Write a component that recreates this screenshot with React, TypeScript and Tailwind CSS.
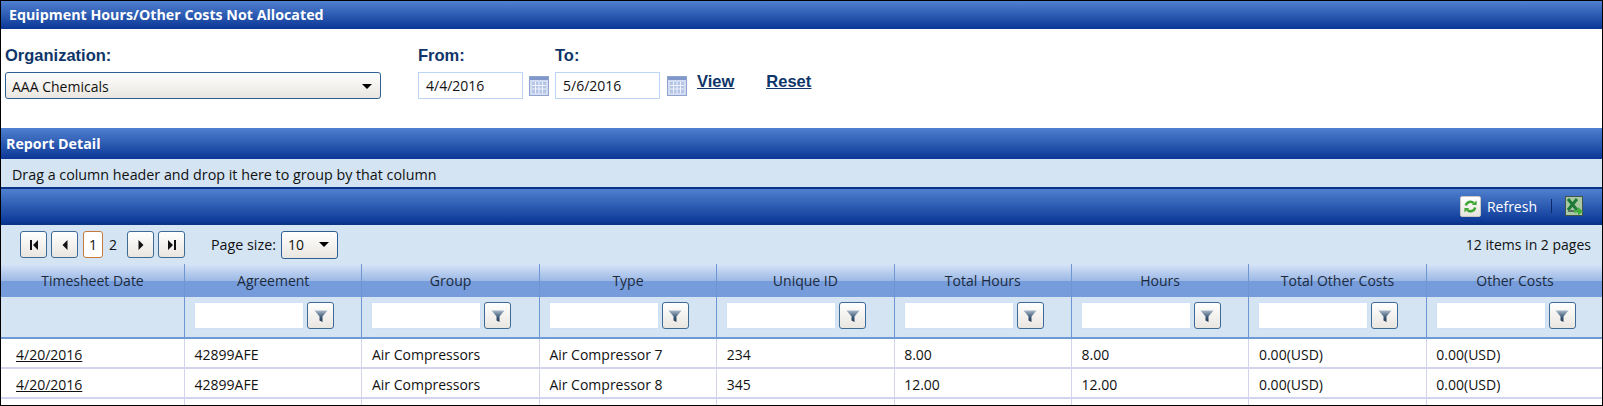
import React from 'react';

const columns = ['Agreement', 'Group', 'Type', 'Unique ID', 'Total Hours', 'Hours', 'Total Other Costs', 'Other Costs'];

const rows = [
  ['4/20/2016', '42899AFE', 'Air Compressors', 'Air Compressor 7', '234', '8.00', '8.00', '0.00(USD)', '0.00(USD)'],
  ['4/20/2016', '42899AFE', 'Air Compressors', 'Air Compressor 8', '345', '12.00', '12.00', '0.00(USD)', '0.00(USD)'],
];

const gridCols = 'grid grid-cols-[183px_repeat(8,177.4px)]';

function Caret() {
  return <span className="w-0 h-0 border-x-[5px] border-x-transparent border-t-[5px] border-t-black" />;
}

function CalendarIcon() {
  return (
    <svg width="20" height="20" viewBox="0 0 20 20" className="shrink-0">
      <rect x="0.5" y="0.5" width="19" height="19" fill="#d3dcf0" stroke="#8fa3cf" />
      <rect x="1" y="1" width="18" height="3" fill="#7f97c9" />
      <path d="M3 6h14v11H3z" fill="#b4c4e6" />
      <path d="M3 9.5h14M3 13h14M6.5 6v11M10 6v11M13.5 6v11" stroke="#eef2fb" strokeWidth="1" />
    </svg>
  );
}

function FunnelIcon() {
  return (
    <svg width="14" height="14" viewBox="0 0 14 14">
      <defs>
        <linearGradient id="funnel" x1="0" y1="0" x2="0" y2="1">
          <stop offset="0" stopColor="#a9b9c9" />
          <stop offset="0.6" stopColor="#3a5673" />
          <stop offset="1" stopColor="#1f3650" />
        </linearGradient>
      </defs>
      <path d="M0.5 1.5h13L8.5 7.5V13l-3-1.5v-4z" fill="url(#funnel)" />
    </svg>
  );
}

function PagerButton({ path }: { path: string }) {
  return (
    <button className="w-[27px] h-[27px] flex items-center justify-center rounded-[3px] border border-[#3f6a96] bg-gradient-to-b from-white to-[#e9e6e0]">
      <svg width="12" height="12" viewBox="0 0 12 12">
        <path d={path} fill="#111" />
      </svg>
    </button>
  );
}

function SectionBar({ title, className }: { title: string; className: string }) {
  return (
    <div className={`bg-gradient-to-b from-[#5080cf] to-[#0a3696] flex items-center font-['Open_Sans',sans-serif] font-bold text-[14.25px] text-white ${className}`}>
      {title}
    </div>
  );
}

function RefreshIcon() {
  return (
    <span className="w-[21px] h-[21px] flex items-center justify-center rounded-[2px] bg-gradient-to-b from-white to-[#e6e4dc] border border-[#c9c9c0]">
      <svg width="15" height="15" viewBox="0 0 16 16" fill="none" stroke="#3fa535" strokeWidth="2.6">
        <path d="M3 7a5 5 0 0 1 8.5-2.5" />
        <path d="M13 9a5 5 0 0 1-8.5 2.5" />
        <path d="M9.5 6.5h5v-5z" fill="#3fa535" stroke="none" />
        <path d="M6.5 9.5h-5v5z" fill="#3fa535" stroke="none" />
      </svg>
    </span>
  );
}

function ExcelIcon() {
  return (
    <svg width="18" height="20" viewBox="0 0 18 20">
      <rect x="0.5" y="0.5" width="17" height="19" fill="#a9c9a3" stroke="#44544a" />
      <path d="M3 3l9 11M12 3L3 14" stroke="#1f7a38" strokeWidth="3" />
      <path d="M3 15h7" stroke="#5a6f66" strokeWidth="2" />
      <path d="M9 14h4v-3l5 4.5-5 4v-3H9z" fill="#3fae3c" />
    </svg>
  );
}

export default function App() {
  return (
    <div className="w-[1603px] h-[406px] overflow-hidden border border-black bg-white font-['Open_Sans',sans-serif] text-[14px] text-[#111]">
      <SectionBar title="Equipment Hours/Other Costs Not Allocated" className="h-[28px] pl-2" />

      {/* filter form */}
      <div className="h-[99px] flex pl-[4px] pt-[14px] items-start">
        <div className="w-[376px] mr-[37px]">
          <div className="h-[29px] font-['Liberation_Sans',sans-serif] font-bold text-[16.5px] text-[#0f3569]">Organization:</div>
          <div className="h-[27px] flex items-center justify-between pl-[6px] pr-[8px] pt-[1px] rounded-[3px] border border-[#2f5f92] bg-gradient-to-b from-white to-[#e9e6e0]">
            <span>AAA Chemicals</span>
            <Caret />
          </div>
        </div>
        <div>
          <div className="h-[29px] font-['Liberation_Sans',sans-serif] font-bold text-[16.5px] text-[#0f3569]">From:</div>
          <div className="flex items-center">
            <input readOnly value="4/4/2016" className="w-[105px] h-[27px] pl-[7px] border border-[#bcd4f5] outline-none" />
            <span className="ml-[6px] mr-[6px]"><CalendarIcon /></span>
          </div>
        </div>
        <div>
          <div className="h-[29px] font-['Liberation_Sans',sans-serif] font-bold text-[16.5px] text-[#0f3569]">To:</div>
          <div className="flex items-center">
            <input readOnly value="5/6/2016" className="w-[105px] h-[27px] pl-[7px] border border-[#bcd4f5] outline-none" />
            <span className="ml-[7px]"><CalendarIcon /></span>
          </div>
        </div>
        <div className="flex gap-[32px] ml-[10px] pt-[26px] font-['Liberation_Sans',sans-serif] font-bold text-[16.5px] text-[#0f3569] underline">
          <a>View</a>
          <a>Reset</a>
        </div>
      </div>

      <SectionBar title="Report Detail" className="h-[31px] pl-[5px]" />

      <div className="h-[28px] pl-[11px] pt-[3px] flex items-center bg-[#d4e4f3] text-[14.3px]">
        Drag a column header and drop it here to group by that column
      </div>

      {/* toolbar */}
      <div className="h-[38px] border-y-2 border-y-[#0b3486] bg-gradient-to-b from-[#5080cf] to-[#0a3696] flex items-center justify-end pr-[19px] text-white">
        <RefreshIcon />
        <span className="ml-[6px]">Refresh</span>
        <span className="ml-[14px] mr-[13px] w-px h-[14px] bg-[#0b2a6a]" />
        <ExcelIcon />
      </div>

      {/* pager */}
      <div className="h-[39px] bg-[#d4e4f3] flex items-center pl-[19px] pr-[11px]">
        <div className="flex items-center gap-[4px]">
          <PagerButton path="M2 1h2v10H2zM10 1v10L5 6z" />
          <PagerButton path="M8.5 1v10L3.5 6z" />
          <div className="flex items-center ml-[1px]">
            <span className="w-[20px] h-[27px] flex items-center justify-center rounded-[3px] border border-[#c8793a] bg-white">1</span>
            <span className="w-[20px] text-center">2</span>
          </div>
          <PagerButton path="M3.5 1v10L8.5 6z" />
          <PagerButton path="M2 1v10L7 6zM8 1h2v10H8z" />
        </div>
        <span className="ml-[26px] text-[14.3px]">Page size:</span>
        <div className="ml-[5px] w-[57px] h-[28px] flex items-center justify-between pl-[6px] pr-[8px] rounded-[3px] border border-[#2f5f92] bg-gradient-to-b from-white to-[#e9e6e0]">
          <span>10</span>
          <Caret />
        </div>
        <span className="ml-auto">12 items in 2 pages</span>
      </div>

      {/* grid header */}
      <div className={`${gridCols} h-[33px] bg-[linear-gradient(#d6e4f7_0%,#9db9e6_50%,#769cdb_52%,#769cdb_100%)]`}>
        {['Timesheet Date', ...columns].map((c, i) => (
          <div key={c} className={`flex items-center justify-center text-[#1b2b3d] ${i > 0 ? 'border-l border-[#6d96d3]' : ''}`}>
            {c}
          </div>
        ))}
      </div>

      {/* filter row */}
      <div className={`${gridCols} h-[42px] bg-[#d4e4f3] border-b-2 border-[#6f9ad8]`}>
        <div />
        {columns.map((c) => (
          <div key={c} className="flex items-start pl-[9px] pt-[5px] border-l border-[#6d96d3]">
            <input readOnly className="w-[110px] h-[27px] bg-white border border-[#cfe0f7] outline-none" />
            <button className="ml-[3px] w-[27px] h-[27px] flex items-center justify-center rounded-[3px] border border-[#3f6a96] bg-gradient-to-b from-white to-[#e9e6e0]">
              <FunnelIcon />
            </button>
          </div>
        ))}
      </div>

      {/* rows */}
      {rows.map((row, r) => (
        <div key={r} className={`${gridCols} h-[30px] border-b-2 border-[#d3d5ee]`}>
          {row.map((cell, i) => (
            <div key={i} className={`flex items-center pt-[2px] ${i === 0 ? 'pl-[15px] underline' : 'pl-[9.6px] border-l border-[#d3d5ee]'}`}>
              {cell}
            </div>
          ))}
        </div>
      ))}
      <div className={`${gridCols} h-[6px]`}>
        {Array.from({ length: 9 }).map((_, i) => (
          <div key={i} className={i > 0 ? 'border-l border-[#d3d5ee]' : ''} />
        ))}
      </div>
    </div>
  );
}
